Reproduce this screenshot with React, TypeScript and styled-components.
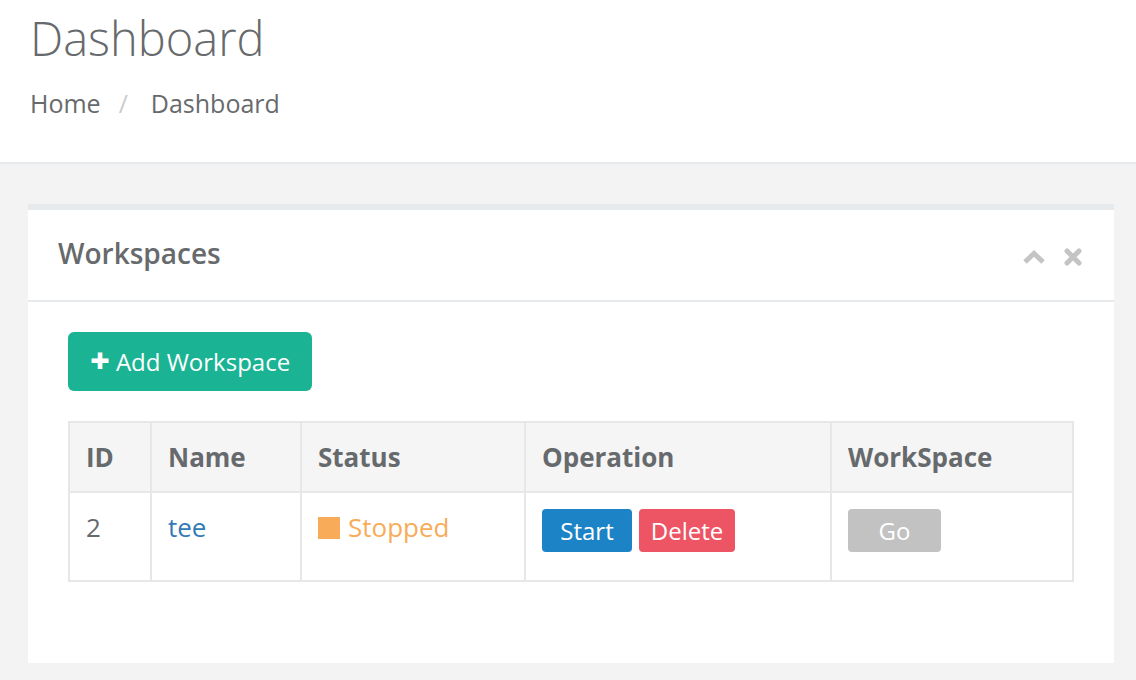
import styled, { createGlobalStyle } from "styled-components";

const GlobalStyle = createGlobalStyle`
	html, body {
		margin: 0;
		padding: 0;
		background: #f3f3f4;
		font-family: "Open Sans", "Liberation Sans", sans-serif;
		color: #676a6c;
	}
	* {
		box-sizing: border-box;
	}
`;

function App() {
	return (
		<>
			<GlobalStyle />
			<Page>
				<PageHeading>
					<Title>Dashboard</Title>
					<Breadcrumb>
						<Crumb>Home</Crumb>
						<Separator>/</Separator>
						<Crumb>Dashboard</Crumb>
					</Breadcrumb>
				</PageHeading>
				<Wrapper>
					<Box>
						<BoxTitle>
							<BoxHeading>Workspaces</BoxHeading>
							<Tools>
								<svg width="24" height="16" viewBox="0 0 24 16">
									<polyline
										points="3,13 12,4.5 21,13"
										fill="none"
										stroke="#c4c4c4"
										strokeWidth="5"
									/>
								</svg>
								<svg width="18" height="18" viewBox="0 0 18 18">
									<path
										d="M3 3 L15 15 M15 3 L3 15"
										stroke="#c4c4c4"
										strokeWidth="5"
										strokeLinecap="round"
									/>
								</svg>
							</Tools>
						</BoxTitle>
						<BoxContent>
							<AddButton>
								<Plus>+</Plus> Add Workspace
							</AddButton>
							<Table>
								<colgroup>
									<col style={{ width: 82 }} />
									<col style={{ width: 150 }} />
									<col style={{ width: 224 }} />
									<col style={{ width: 306 }} />
									<col style={{ width: 242 }} />
								</colgroup>
								<thead>
									<tr>
										<Th>ID</Th>
										<Th>Name</Th>
										<Th>Status</Th>
										<Th>Operation</Th>
										<Th>WorkSpace</Th>
									</tr>
								</thead>
								<tbody>
									<tr>
										<Td>2</Td>
										<Td>
											<NameLink href="#">tee</NameLink>
										</Td>
										<Td>
											<Status>
												<StatusDot />
												Stopped
											</Status>
										</Td>
										<Td>
											<Ops>
												<SmallButton $bg="#1c84c6" $width={90}>
													Start
												</SmallButton>
												<SmallButton $bg="#ed5565" $width={96}>
													Delete
												</SmallButton>
											</Ops>
										</Td>
										<Td>
											<SmallButton $bg="#c2c2c2" $width={93}>
												Go
											</SmallButton>
										</Td>
									</tr>
								</tbody>
							</Table>
						</BoxContent>
					</Box>
				</Wrapper>
			</Page>
		</>
	);
}

export default App;

const Page = styled.div`
	width: 1136px;
	min-height: 680px;
	background: #f3f3f4;
`;

const PageHeading = styled.header`
	background: #ffffff;
	border-bottom: 2px solid #e7eaec;
	height: 164px;
	padding: 6px 30px 0;
`;

const Title = styled.h2`
	margin: 0;
	font-size: 47px;
	font-weight: 300;
	line-height: 64px;
	color: #676a6c;
`;

const Breadcrumb = styled.div`
	display: flex;
	align-items: center;
	margin-top: 15px;
	font-size: 25px;
	line-height: 36px;
`;

const Crumb = styled.span`
	color: #676a6c;
`;

const Separator = styled.span`
	color: #cccccc;
	padding: 0 23px 0 18px;
`;

const Wrapper = styled.main`
	padding: 40px 22px 0 28px;
`;

const Box = styled.section`
	background: #ffffff;
	border-top: 6px solid #e7eaec;
`;

const BoxTitle = styled.div`
	display: flex;
	align-items: center;
	justify-content: space-between;
	height: 92px;
	padding: 0 30px;
	border-bottom: 2px solid #e7eaec;
`;

const BoxHeading = styled.h5`
	margin: 0;
	font-size: 28px;
	font-weight: 600;
	color: #676a6c;
	margin-top: -4px;
`;

const Tools = styled.div`
	display: flex;
	align-items: center;
	gap: 18px;
	margin-right: 2px;
	margin-top: 4px;
`;

const BoxContent = styled.div`
	padding: 30px 40px 81px;
`;

const AddButton = styled.button`
	display: inline-flex;
	align-items: center;
	height: 59px;
	padding: 0 22px;
	border: none;
	border-radius: 6px;
	background: #1ab394;
	color: #ffffff;
	font-family: inherit;
	font-size: 24px;
	gap: 6px;
`;

const Plus = styled.span`
	font-size: 34px;
	font-weight: 800;
	line-height: 1;
	margin-top: -4px;
`;

const Table = styled.table`
	margin-top: 30px;
	width: 1004px;
	border-collapse: collapse;
	table-layout: fixed;
	font-size: 26px;
`;

const Th = styled.th`
	text-align: left;
	background: #f5f5f6;
	border: 2px solid #e7e7e7;
	padding: 16px 16px 15px;
	font-weight: 700;
	line-height: 37px;
	color: #676a6c;
`;

const Td = styled.td`
	border: 2px solid #e7e7e7;
	padding: 16px 16px 28px;
	line-height: 37px;
	vertical-align: top;
	color: #676a6c;
`;

const NameLink = styled.a`
	color: #337ab7;
	text-decoration: none;
`;

const Status = styled.span`
	display: inline-flex;
	align-items: center;
	gap: 8px;
	color: #f8ac59;
`;

const StatusDot = styled.span`
	width: 22px;
	height: 22px;
	background: #f8ac59;
`;

const Ops = styled.div`
	display: flex;
	gap: 7px;
`;

const SmallButton = styled.button<{ $bg: string; $width?: number }>`
	display: inline-flex;
	align-items: center;
	justify-content: center;
	height: 43px;
	${(p) => (p.$width ? `width: ${p.$width}px;` : "")}
	padding: 0;
	border: none;
	border-radius: 4px;
	background: ${(p) => p.$bg};
	color: #ffffff;
	font-family: inherit;
	font-size: 24px;
	vertical-align: top;
`;
